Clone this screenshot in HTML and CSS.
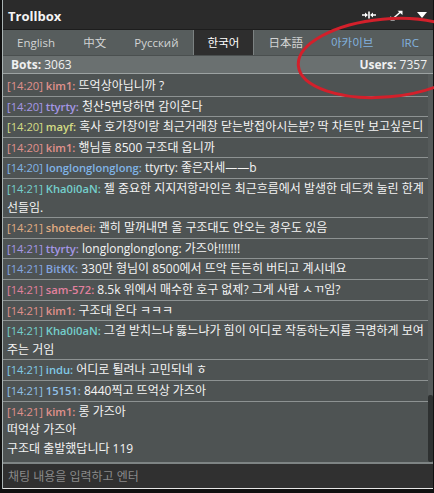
FILE: index.html
```html
<!DOCTYPE html>
<html lang="ko">
<head>
<meta charset="utf-8">
<title>Trollbox</title>
<link rel="stylesheet" href="styles.css">
</head>
<body>
<div class="frame">
  <header class="titlebar">
    <span class="title">Trollbox</span>
    <div class="tools">
      <svg class="ico" width="14" height="10" viewBox="0 0 14 10"><path d="M0 5H5M9 5H14" stroke="#fff" stroke-width="1.6"/><path d="M7 1.5V8.5" stroke="#fff" stroke-width="1.6"/><path d="M3 2.5L6 5L3 7.5Z M11 2.5L8 5L11 7.5Z" fill="#fff"/></svg>
      <svg class="ico" width="13" height="11" viewBox="0 0 13 11"><path d="M2.5 9L10.5 2" stroke="#fff" stroke-width="1.6"/><path d="M7.5 0.8H12.5V5Z M0.5 10.5V6L5 10.5Z" fill="#fff"/></svg>
      <svg class="ico" width="10" height="6" viewBox="0 0 10 6"><path d="M0 0H10L5 6Z" fill="#fff"/></svg>
    </div>
  </header>
  <nav class="tabs">
    <span class="tab">English</span>
    <span class="tab">中文</span>
    <span class="tab">Русский</span>
    <span class="tab active">한국어</span>
    <span class="tab">日本語</span>
    <span class="tab link">아카이브</span>
    <span class="tab link">IRC</span>
  </nav>
  <div class="stats">
    <span><b>Bots:</b> 3063</span>
    <span><b>Users:</b> 7357</span>
  </div>
  <div class="chat">
    <div class="list">
      <div class="msg"><span class="who u-kim">[14:20] <b>kim1:</b></span> <span class="txt">뜨억상아닙니까 ?</span></div>
      <div class="msg"><span class="who u-tty">[14:20] <b>ttyrty:</b></span> <span class="txt">청산5번당하면 감이온다</span></div>
      <div class="msg"><span class="who u-mayf">[14:20] <b>mayf:</b></span> <span class="txt">혹사 호가창이랑 최근거래창 닫는방접아시는분? 딱 차트만 보고싶은디</span></div>
      <div class="msg"><span class="who u-kim">[14:20] <b>kim1:</b></span> <span class="txt">행님들 8500 구조대 옵니까</span></div>
      <div class="msg"><span class="who u-long">[14:20] <b>longlonglonglong:</b></span> <span class="txt">ttyrty: 좋은자세——b</span></div>
      <div class="msg"><span class="who u-kha">[14:21] <b>Kha0i0aN:</b></span> <span class="txt">젤 중요한 지지저항라인은 최근흐름에서 발생한 데드캣 눌린 한계</span><br><span class="txt">선들임.</span></div>
      <div class="msg"><span class="who u-shot">[14:21] <b>shotedei:</b></span> <span class="txt">괜히 말꺼내면 올 구조대도 안오는 경우도 있음</span></div>
      <div class="msg"><span class="who u-tty">[14:21] <b>ttyrty:</b></span> <span class="txt">longlonglonglong: 가즈아!!!!!!!</span></div>
      <div class="msg"><span class="who u-bit">[14:21] <b>BitKK:</b></span> <span class="txt">330만 형님이 8500에서 뜨악 든든히 버티고 계시네요</span></div>
      <div class="msg"><span class="who u-sam">[14:21] <b>sam-572:</b></span> <span class="txt">8.5k 위에서 매수한 호구 없제? 그게 사람 ㅅㄲ임?</span></div>
      <div class="msg"><span class="who u-kim">[14:21] <b>kim1:</b></span> <span class="txt">구조대 온다 ㅋㅋㅋ</span></div>
      <div class="msg"><span class="who u-kha">[14:21] <b>Kha0i0aN:</b></span> <span class="txt">그걸 받치느냐 뚫느냐가 힘이 어디로 작동하는지를 극명하게 보여</span><br><span class="txt">주는 거임</span></div>
      <div class="msg"><span class="who u-indu">[14:21] <b>indu:</b></span> <span class="txt">어디로 튈려나 고민되네 ㅎ</span></div>
      <div class="msg"><span class="who u-151">[14:21] <b>15151:</b></span> <span class="txt">8440찍고 뜨억상 가즈아</span></div>
      <div class="msg multi">
        <div class="line"><span class="who u-kim">[14:21] <b>kim1:</b></span> <span class="txt">롱 가즈아</span></div>
        <div class="line">떠억상 가즈아</div>
        <div class="line">구조대 출발했답니다 119</div>
      </div>
    </div>
    <div class="scroll"><div class="thumb"></div></div>
  </div>
  <input class="entry" type="text" placeholder="채팅 내용을 입력하고 엔터">
</div>
<svg class="annot" width="434" height="493" viewBox="0 0 434 493"><ellipse cx="386" cy="58" rx="88" ry="39" transform="rotate(-5 386 58)" fill="none" stroke="#d3202b" stroke-width="3"/></svg>
</body>
</html>
```
FILE: styles.css
```css
html, body {
  margin: 0;
  padding: 0;
}
body {
  background: #101010;
  width: 434px;
  height: 493px;
  overflow: hidden;
  position: relative;
  font-family: "Open Sans", "Noto Sans CJK KR", sans-serif;
  color: #f2f2f2;
}
.frame {
  margin-left: 2px;
  width: 430px;
  border-left: 1px solid #aab4b4;
  display: flex;
  flex-direction: column;
}
.titlebar {
  height: 29px;
  background: #2b2b2b;
  display: flex;
  align-items: center;
  justify-content: space-between;
  padding: 0 6px 0 5px;
}
.title {
  font-weight: 700;
  font-size: 13px;
  color: #f4f4f4;
  margin-top: 2px;
}
.tools {
  display: flex;
  align-items: center;
  gap: 14px;
  margin-top: 1px;
}
.ico {
  display: block;
}
.tabs {
  height: 25px;
  border-top: 1px solid #1d1d1d;
  background: #575d5d;
  display: flex;
  font-size: 11.5px;
}
.tab {
  flex: 1 1 auto;
  text-align: center;
  line-height: 25px;
  color: #d2d4d4;
}
.tab.active {
  background: #2e2e2e;
  color: #fff;
  border-left: 1px solid #7c8282;
  border-right: 1px solid #7c8282;
}
.tab.link {
  color: #82b2df;
}
.stats {
  height: 17px;
  background: #6a7070;
  border-top: 1px solid #4a4f4f;
  border-bottom: 1px solid #9ca2a2;
  display: flex;
  justify-content: space-between;
  align-items: center;
  padding: 0 6px 0 8px;
  font-size: 12px;
  color: #f0f0f0;
}
.stats b {
  font-weight: 700;
}
.chat {
  height: 388px;
  display: flex;
  background: #4e5353;
}
.list {
  flex: 1;
  padding-top: 2px;
}
.msg {
  padding: 1px 3px 0 4px;
  line-height: 18.6px;
  border-bottom: 1px solid #8d9292;
  font-size: 12px;
  color: #f4f4f4;
}
.msg.multi {
  border-bottom: none;
  padding-top: 1px;
}
.who {
  font-size: 11.2px;
}
.who b {
  font-weight: 600;
}
.u-kim { color: #e0918c; }
.u-tty { color: #a597e6; }
.u-mayf { color: #d4dc84; }
.u-long { color: #80b4e6; }
.u-kha { color: #74cfcc; }
.u-shot { color: #e0ab82; }
.u-bit { color: #84a5e0; }
.u-sam { color: #e2819e; }
.u-indu { color: #80c9e6; }
.u-151 { color: #90c0e6; }
.scroll {
  width: 5px;
  background: #555a5a;
  display: flex;
  flex-direction: column;
}
.thumb {
  margin-top: auto;
  height: 67px;
  background: #2e3131;
  border-radius: 2px;
}
.entry {
  display: block;
  box-sizing: border-box;
  width: 430px;
  height: 27px;
  margin: 0;
  border: none;
  border-top: 2px solid #7e8484;
  border-bottom: 1px solid #e6e6e6;
  background: #303030;
  padding: 0 5px;
  font-family: "Open Sans", "Noto Sans CJK KR", sans-serif;
  font-size: 12px;
  color: #eee;
  outline: none;
}
.entry::placeholder {
  color: #8a8a8a;
}
.annot {
  position: absolute;
  left: 0;
  top: 0;
  pointer-events: none;
}
```
